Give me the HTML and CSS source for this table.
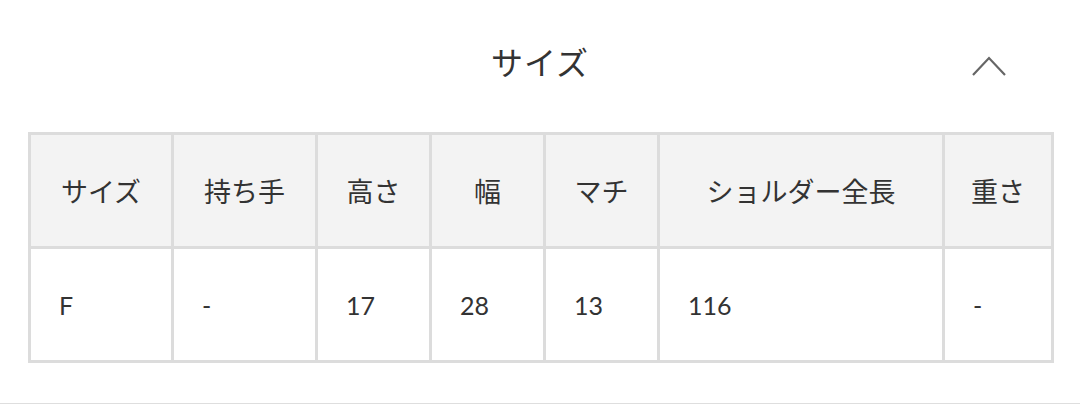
FILE: index.html
```html
<!DOCTYPE html>
<html lang="ja">
<head>
<meta charset="utf-8">
<link rel="stylesheet" href="styles.css">
</head>
<body>
<section class="size-section">
  <header class="size-header">
    <span class="spacer"></span>
    <h2 class="size-title">サイズ</h2>
    <span class="toggle">
      <svg width="38" height="22" viewBox="0 0 38 22"><path d="M3 20 L19 3 L35 20" fill="none" stroke="#666" stroke-width="2.2"/></svg>
    </span>
  </header>
  <table class="size-table">
    <colgroup>
      <col class="c1"><col class="c2"><col class="c3"><col class="c4"><col class="c5"><col class="c6"><col class="c7">
    </colgroup>
    <thead>
      <tr>
        <th>サイズ</th><th>持ち手</th><th>高さ</th><th>幅</th><th>マチ</th><th>ショルダー全長</th><th>重さ</th>
      </tr>
    </thead>
    <tbody>
      <tr>
        <td>F</td><td>-</td><td>17</td><td>28</td><td>13</td><td>116</td><td>-</td>
      </tr>
    </tbody>
  </table>
</section>
</body>
</html>
```
FILE: styles.css
```css
html, body {
  margin: 0;
  padding: 0;
  background: #fff;
}
body {
  font-family: Lato, "Noto Sans CJK JP", sans-serif;
  color: #333;
}
.size-section {
  padding: 0 0 40px 0;
  border-bottom: 1px solid #dedede;
}
.size-header {
  display: grid;
  grid-template-columns: 1fr auto 1fr;
  align-items: center;
  height: 122px;
  margin-bottom: 10px;
}
.size-title {
  margin: 0;
  font-family: "Noto Sans CJK JP", sans-serif;
  font-weight: 400;
  font-size: 32px;
  letter-spacing: 1px;
  color: #333;
}
.toggle {
  justify-self: end;
  margin-right: 72px;
  margin-top: 10px;
  display: flex;
}
.size-table {
  margin-left: 28px;
  width: 1023px;
  table-layout: fixed;
  border-collapse: collapse;
  border: 3px solid #dcdcdc;
}
.c1 { width: 143px; }
.c2 { width: 144px; }
.c3 { width: 114px; }
.c4 { width: 114px; }
.c5 { width: 114px; }
.c6 { width: 285px; }
.c7 { width: 109px; }
.size-table th,
.size-table td {
  border: 3px solid #dcdcdc;
  height: 111px;
  padding: 0;
  font-weight: 400;
  color: #333;
}
.size-table th {
  background: #f3f3f3;
  text-align: center;
  font-size: 27px;
  font-family: "Noto Sans CJK JP", sans-serif;
}
.size-table td {
  text-align: left;
  padding-left: 28px;
  font-size: 25px;
  font-family: Lato, "Noto Sans CJK JP", sans-serif;
}
```
